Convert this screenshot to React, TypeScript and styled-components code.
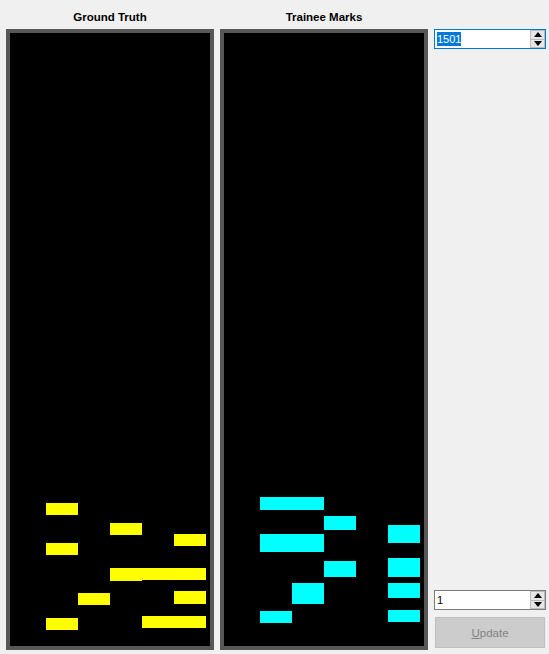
import React from "react";
import styled, { createGlobalStyle } from "styled-components";

interface IMark {
  x: number;
  y: number;
  w: number;
  h: number;
}

const GlobalStyle = createGlobalStyle`
  html, body {
    margin: 0;
    padding: 0;
    background: #f0f0f0;
    font-family: "Liberation Sans", Arial, sans-serif;
  }
`;

const Window = styled.div`
  display: flex;
  gap: 6px;
  height: 654px;
  padding: 0 3px 0 6px;
  box-sizing: border-box;
  background: #f0f0f0;
`;

const PanelColumn = styled.div`
  display: flex;
  flex-direction: column;
  width: 208px;
`;

const PanelTitle = styled.div`
  height: 29px;
  box-sizing: border-box;
  padding-top: 11px;
  text-align: center;
  font-size: 11.5px;
  line-height: 13px;
  font-weight: bold;
  color: #000;
`;

const Canvas = styled.div`
  height: 621px;
  box-sizing: border-box;
  border: 4px solid #575757;
  background: #000;
`;

const Side = styled.div`
  display: flex;
  flex-direction: column;
  width: 112px;
  padding: 29px 0 6px;
  box-sizing: border-box;
`;

const Spacer = styled.div`
  flex: 1;
`;

const SpinBox = styled.div<{ $focused?: boolean }>`
  display: flex;
  align-items: center;
  height: 20px;
  box-sizing: border-box;
  border: 1px solid ${(p) => (p.$focused ? "#0078d7" : "#7a7a7a")};
  background: #fff;
  padding-left: 2px;
`;

const SpinValue = styled.div`
  flex: 1;
  font-size: 11px;
  line-height: 14px;
  color: #000;
`;

const Selected = styled.span`
  background: #0078d7;
  color: #fff;
  display: inline-block;
  line-height: 14px;
`;

const SpinButtons = styled.div`
  display: flex;
  flex-direction: column;
  width: 15px;
  height: 18px;
`;

const SpinArrow = styled.div`
  flex: 1;
  display: flex;
  align-items: center;
  justify-content: center;
  background: #e6e6e6;
  border: 1px solid #bcbcbc;
  box-sizing: border-box;
  & + & {
    border-top: none;
  }
`;

const UpdateButton = styled.button`
  height: 31px;
  margin: 7px 1px 0;
  border: 1px solid #bfbfbf;
  background: #cccccc;
  color: #838383;
  font-family: "Liberation Sans", Arial, sans-serif;
  font-size: 11.5px;
  padding: 0;
  cursor: default;
  u {
    text-decoration: underline;
  }
`;

const groundTruth: IMark[] = [
  { x: 36, y: 470, w: 32, h: 12 },
  { x: 100, y: 490, w: 32, h: 12 },
  { x: 164, y: 501, w: 32, h: 12 },
  { x: 36, y: 510, w: 32, h: 12 },
  { x: 100, y: 535, w: 32, h: 13 },
  { x: 132, y: 535, w: 64, h: 12 },
  { x: 68, y: 560, w: 32, h: 12 },
  { x: 164, y: 558, w: 32, h: 13 },
  { x: 36, y: 585, w: 32, h: 12 },
  { x: 132, y: 583, w: 64, h: 12 },
];

const traineeMarks: IMark[] = [
  { x: 36, y: 464, w: 64, h: 13 },
  { x: 100, y: 483, w: 32, h: 14 },
  { x: 164, y: 492, w: 32, h: 18 },
  { x: 36, y: 501, w: 64, h: 18 },
  { x: 100, y: 528, w: 32, h: 16 },
  { x: 164, y: 525, w: 32, h: 19 },
  { x: 68, y: 550, w: 32, h: 21 },
  { x: 164, y: 550, w: 32, h: 15 },
  { x: 36, y: 578, w: 32, h: 12 },
  { x: 164, y: 577, w: 32, h: 12 },
];

const MarkPanel: React.FC<{ title: string; marks: IMark[]; color: string }> = ({
  title,
  marks,
  color,
}) => (
  <PanelColumn>
    <PanelTitle>{title}</PanelTitle>
    <Canvas>
      <svg width="200" height="613" style={{ display: "block" }}>
        {marks.map((m, i) => (
          <rect key={i} x={m.x} y={m.y} width={m.w} height={m.h} fill={color} />
        ))}
      </svg>
    </Canvas>
  </PanelColumn>
);

const Arrows = () => (
  <SpinButtons>
    <SpinArrow>
      <svg width="8" height="5">
        <path d="M4 0 L8 5 L0 5 Z" fill="#000" />
      </svg>
    </SpinArrow>
    <SpinArrow>
      <svg width="8" height="5">
        <path d="M0 0 L8 0 L4 5 Z" fill="#000" />
      </svg>
    </SpinArrow>
  </SpinButtons>
);

const App: React.FC = () => {
  return (
    <>
      <GlobalStyle />
      <Window>
        <MarkPanel title="Ground Truth" marks={groundTruth} color="#ffff00" />
        <MarkPanel title="Trainee Marks" marks={traineeMarks} color="#00ffff" />
        <Side>
          <SpinBox $focused>
            <SpinValue>
              <Selected>1501</Selected>
            </SpinValue>
            <Arrows />
          </SpinBox>
          <Spacer />
          <SpinBox>
            <SpinValue>1</SpinValue>
            <Arrows />
          </SpinBox>
          <UpdateButton>
            <u>U</u>pdate
          </UpdateButton>
        </Side>
      </Window>
    </>
  );
};

export default App;
